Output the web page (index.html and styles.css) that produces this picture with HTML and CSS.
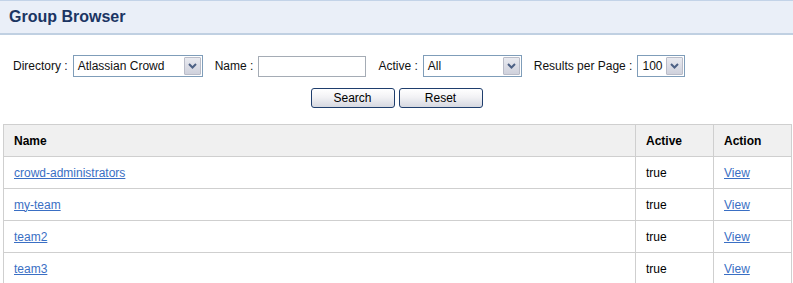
FILE: index.html
```html
<!DOCTYPE html>
<html lang="en">
  <head>
    <meta charset="UTF-8" />
    <title>Group Browser</title>
    <link rel="stylesheet" href="styles.css">
  </head>
  <body>
    <div class="page-header">
      <h1>Group Browser</h1>
    </div>

    <form class="search-form" onsubmit="return false;">
      <div class="filter-row">
        <label class="field">
          <span class="field-label">Directory :</span>
          <span class="select select-directory">
            <span class="select-value">Atlassian Crowd</span>
            <span class="select-btn">
              <svg width="9" height="6" viewBox="0 0 9 6"><path d="M1 1 L4.5 4.5 L8 1" fill="none" stroke="#4d6185" stroke-width="2"/></svg>
            </span>
          </span>
        </label>
        <label class="field">
          <span class="field-label">Name :</span>
          <input type="text" class="text-input" />
        </label>
        <label class="field">
          <span class="field-label">Active :</span>
          <span class="select select-active">
            <span class="select-value">All</span>
            <span class="select-btn">
              <svg width="9" height="6" viewBox="0 0 9 6"><path d="M1 1 L4.5 4.5 L8 1" fill="none" stroke="#4d6185" stroke-width="2"/></svg>
            </span>
          </span>
        </label>
        <label class="field">
          <span class="field-label">Results per Page :</span>
          <span class="select select-results">
            <span class="select-value">100</span>
            <span class="select-btn">
              <svg width="9" height="6" viewBox="0 0 9 6"><path d="M1 1 L4.5 4.5 L8 1" fill="none" stroke="#4d6185" stroke-width="2"/></svg>
            </span>
          </span>
        </label>
      </div>
      <div class="button-row">
        <button type="submit" class="btn">Search</button>
        <button type="reset" class="btn">Reset</button>
      </div>
    </form>

    <table class="results">
      <thead>
        <tr>
          <th class="col-name">Name</th>
          <th class="col-active">Active</th>
          <th class="col-action">Action</th>
        </tr>
      </thead>
      <tbody>
        <tr>
          <td><a href="#">crowd-administrators</a></td>
          <td>true</td>
          <td><a href="#">View</a></td>
        </tr>
        <tr>
          <td><a href="#">my-team</a></td>
          <td>true</td>
          <td><a href="#">View</a></td>
        </tr>
        <tr>
          <td><a href="#">team2</a></td>
          <td>true</td>
          <td><a href="#">View</a></td>
        </tr>
        <tr>
          <td><a href="#">team3</a></td>
          <td>true</td>
          <td><a href="#">View</a></td>
        </tr>
      </tbody>
    </table>
  </body>
</html>
```

FILE: styles.css
```css
* {
  margin: 0;
  padding: 0;
  box-sizing: border-box;
}

body {
  background: #ffffff;
  color: #000000;
  font-family: "Liberation Sans", Arial, sans-serif;
  font-size: 12px;
  overflow: hidden;
}

.page-header {
  height: 35px;
  background: #eaeff8;
  border-top: 1px solid #c3d3e8;
  border-bottom: 2px solid #c0d0e2;
  padding-left: 9px;
}

.page-header h1 {
  font-size: 16px;
  font-weight: bold;
  color: #1b3563;
  line-height: 31px;
}

.search-form {
  padding-top: 20px;
}

.filter-row {
  display: flex;
  align-items: center;
  height: 22px;
  padding-left: 13px;
}

.field {
  display: flex;
  align-items: center;
  margin-right: 12px;
  color: #111;
}

.field-label {
  margin-right: 5px;
}

.select {
  display: inline-flex;
  align-items: center;
  justify-content: space-between;
  height: 22px;
  border: 1px solid #7f9db9;
  background: #fff;
  padding: 1px;
}

.select-value {
  padding-left: 3px;
  font-size: 12px;
  line-height: 18px;
  align-self: flex-start;
}

.select-btn {
  display: flex;
  align-items: center;
  justify-content: center;
  width: 17px;
  height: 18px;
  border: 1px solid #b9bcc8;
  border-radius: 1px;
  background: linear-gradient(#e9eaf0, #cfd1dc);
}

.select-directory {
  width: 130px;
}

.select-active {
  width: 99px;
}

.select-results {
  width: 48px;
}

.text-input {
  width: 108px;
  height: 21px;
  border: 1px solid #a5acb5;
  font-family: inherit;
  font-size: 12px;
  outline: none;
}

.button-row {
  display: flex;
  justify-content: center;
  gap: 4px;
  margin-top: 11px;
}

.btn {
  width: 84px;
  height: 20px;
  border: 1px solid #1f3e6d;
  border-radius: 3px;
  background: linear-gradient(#ffffff, #f2f2f5 45%, #d6d8e0);
  font-family: inherit;
  font-size: 12px;
  color: #000;
}

.results {
  margin: 16px 1px 0 3px;
  width: calc(100% - 4px);
  border-collapse: collapse;
  border: 1px solid #cfcfcf;
}

.results th,
.results td {
  height: 32px;
  border: 1px solid #cfcfcf;
  padding: 0 10px;
  text-align: left;
  vertical-align: middle;
  font-size: 12px;
}

.results th {
  background: #f0f0f0;
  font-weight: bold;
}

.col-active,
.col-action {
  width: 78px;
}

.results a {
  color: #3a6fc4;
  text-decoration: underline;
}
```
